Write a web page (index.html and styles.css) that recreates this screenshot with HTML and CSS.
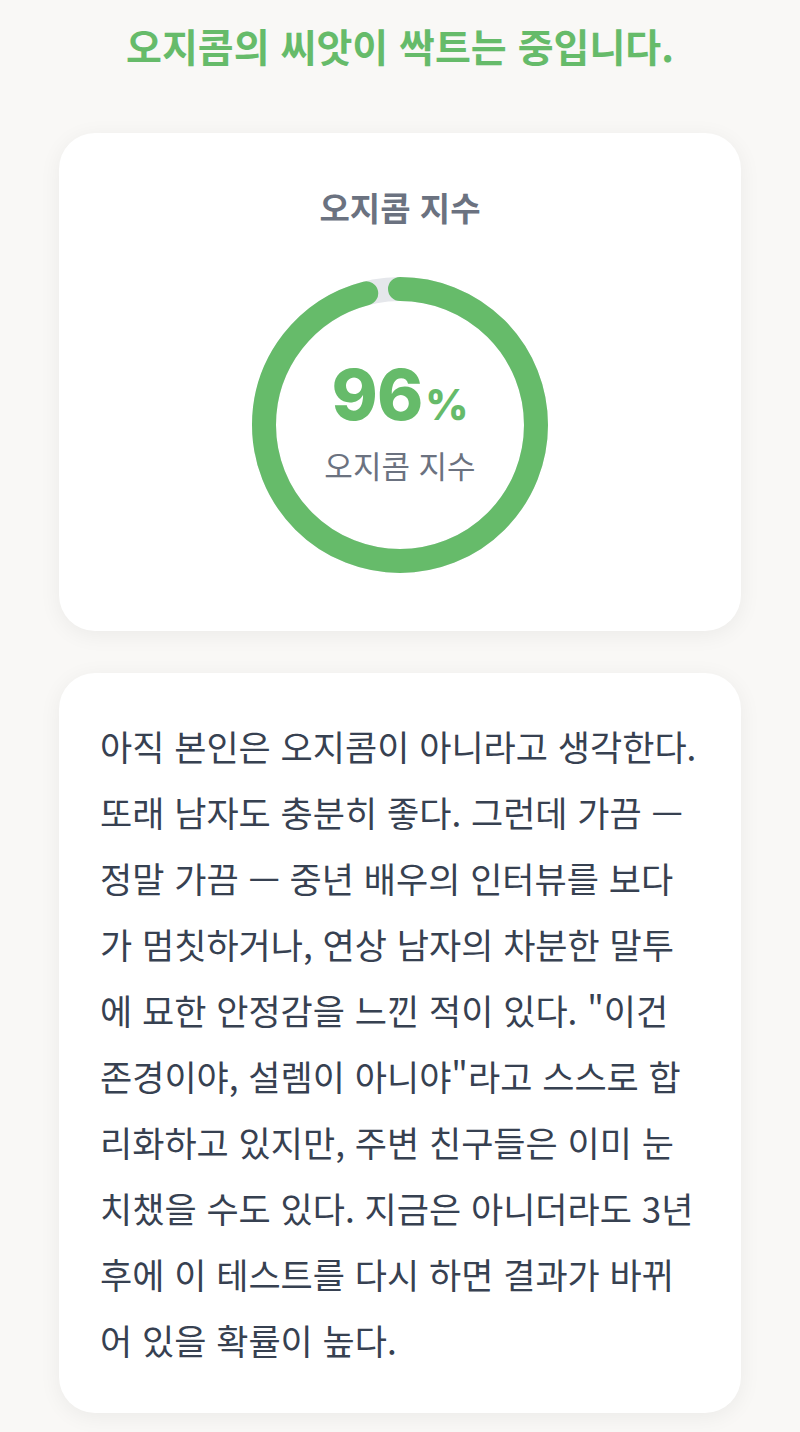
FILE: index.html
```html
<!DOCTYPE html>
<html lang="ko">
<head>
<meta charset="utf-8">
<title>오지콤 지수</title>
<link rel="stylesheet" href="styles.css">
</head>
<body>
<main class="page">
  <h1 class="title">오지콤의 씨앗이 싹트는 중입니다.</h1>
  <section class="card score-card">
    <h2 class="score-label">오지콤 지수</h2>
    <div class="ring">
      <svg class="ring-svg" viewBox="0 0 296 296" width="296" height="296" aria-hidden="true">
        <circle class="ring-track" cx="148" cy="148" r="136"></circle>
        <circle class="ring-bar" cx="148" cy="148" r="136" pathLength="100" stroke-dasharray="96 100" transform="rotate(-90 148 148)"></circle>
      </svg>
      <div class="ring-center">
        <div class="ring-value"><span class="num">96</span><span class="pct">%</span></div>
        <div class="ring-sub">오지콤 지수</div>
      </div>
    </div>
  </section>
  <section class="card text-card">
    <p class="desc">아직 본인은 오지콤이 아니라고 생각한다. 또래 남자도 충분히 좋다. 그런데 가끔 — 정말 가끔 — 중년 배우의 인터뷰를 보다가 멈칫하거나, 연상 남자의 차분한 말투에 묘한 안정감을 느낀 적이 있다. "이건 존경이야, 설렘이 아니야"라고 스스로 합리화하고 있지만, 주변 친구들은 이미 눈치챘을 수도 있다. 지금은 아니더라도 3년 후에 이 테스트를 다시 하면 결과가 바뀌어 있을 확률이 높다.</p>
  </section>
</main>
</body>
</html>
```

FILE: styles.css
```css
html, body {
  margin: 0;
  padding: 0;
}
body {
  background: #f9f8f6;
  font-family: "Noto Sans CJK KR", "Noto Sans", sans-serif;
  color: #374151;
}
.page {
  width: 682px;
  margin: 0 auto;
  padding: 20px 0 20px;
  display: flex;
  flex-direction: column;
  gap: 42px;
}
.title {
  margin: 0 0 21px;
  text-align: center;
  font-size: 39px;
  line-height: 50px;
  font-weight: 700;
  color: #66bb6a;
}
.card {
  background: #ffffff;
  border-radius: 36px;
  box-shadow: 0 4px 22px rgba(0, 0, 0, 0.06);
}
.score-card {
  padding: 52px 0 58px;
  display: flex;
  flex-direction: column;
  align-items: center;
  gap: 48px;
}
.score-label {
  margin: 0;
  font-size: 33px;
  line-height: 44px;
  font-weight: 700;
  color: #6b7280;
}
.ring {
  position: relative;
  width: 296px;
  height: 296px;
}
.ring-svg {
  display: block;
}
.ring-track {
  fill: none;
  stroke: #e5e7eb;
  stroke-width: 24;
}
.ring-bar {
  fill: none;
  stroke: #66bb6a;
  stroke-width: 24;
  stroke-linecap: round;
}
.ring-center {
  position: absolute;
  inset: 0;
  display: flex;
  flex-direction: column;
  align-items: center;
  justify-content: center;
}
.ring-value {
  display: flex;
  align-items: baseline;
  margin-top: -6px;
  color: #66bb6a;
  font-family: Inter, "Liberation Sans", sans-serif;
  font-weight: 800;
  line-height: 1;
}
.ring-value .num {
  font-size: 70px;
  letter-spacing: -1px;
}
.ring-value .pct {
  font-size: 42px;
  margin-left: 3px;
}
.ring-sub {
  margin-top: 16px;
  font-size: 31px;
  line-height: 38px;
  color: #6b7280;
}
.text-card {
  padding: 40px 40px 40px 41px;
}
.desc {
  margin: 0;
  font-size: 35px;
  line-height: 66px;
  color: #374151;
}
```
